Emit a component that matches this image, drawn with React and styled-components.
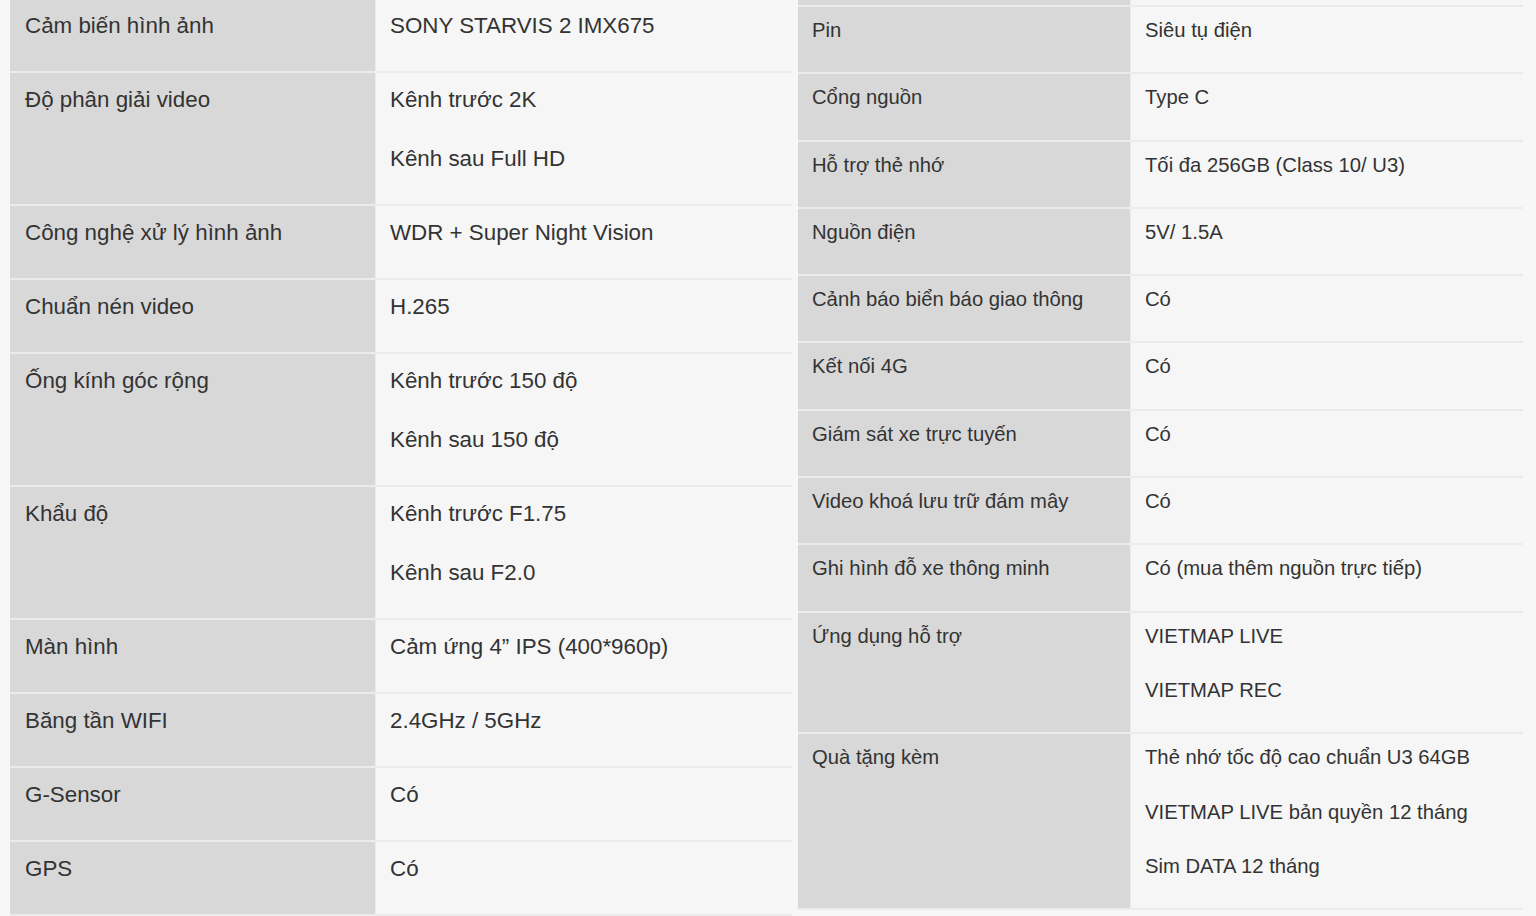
import React from 'react';
import styled, { createGlobalStyle } from 'styled-components';

const GlobalStyle = createGlobalStyle`
  html, body {
    margin: 0;
    padding: 0;
    background: #f7f7f7;
    overflow: hidden;
  }
  body {
    font-family: "Liberation Sans", Arial, sans-serif;
    color: #333;
  }
`;

const Page = styled.div`
  display: flex;
  align-items: flex-start;
  gap: 6px;
  padding-left: 10px;
  width: 1536px;
  height: 916px;
  box-sizing: border-box;
  overflow: hidden;
`;

const Table = styled.div`
  width: ${(p) => p.$width}px;
  margin-top: ${(p) => p.$offset || 0}px;
  font-size: ${(p) => p.$fs}px;
  flex-shrink: 0;
`;

const Row = styled.div`
  display: grid;
  grid-template-columns: ${(p) => p.$labelWidth}px 1fr;
  border-bottom: 2px solid #ebebeb;
  height: ${(p) => (p.$cut ? `${p.$cut}px` : 'auto')};
`;

const Cell = styled.div`
  padding: ${(p) => (p.$cut ? 0 : `${p.$pt}px ${p.$px}px ${p.$pb}px`)};
  line-height: ${(p) => p.$lh}px;
`;

const Label = styled(Cell)`
  background: #d8d8d8;
`;

const Value = styled(Cell)`
  background: #f6f6f6;
  border-left: 1px solid #ececec;
`;

const Line = styled.p`
  margin: 0 0 ${(p) => p.$gap}px;
`;

const leftRows = [
  ['Cảm biến hình ảnh', ['SONY STARVIS 2 IMX675']],
  ['Độ phân giải video', ['Kênh trước 2K', 'Kênh sau Full HD']],
  ['Công nghệ xử lý hình ảnh', ['WDR + Super Night Vision']],
  ['Chuẩn nén video', ['H.265']],
  ['Ống kính góc rộng', ['Kênh trước 150 độ', 'Kênh sau 150 độ']],
  ['Khẩu độ', ['Kênh trước F1.75', 'Kênh sau F2.0']],
  ['Màn hình', ['Cảm ứng 4” IPS (400*960p)']],
  ['Băng tần WIFI', ['2.4GHz / 5GHz']],
  ['G-Sensor', ['Có']],
  ['GPS', ['Có']],
];

const rightRows = [
  ['Pin', ['Siêu tụ điện']],
  ['Cổng nguồn', ['Type C']],
  ['Hỗ trợ thẻ nhớ', ['Tối đa 256GB (Class 10/ U3)']],
  ['Nguồn điện', ['5V/ 1.5A']],
  ['Cảnh báo biển báo giao thông', ['Có']],
  ['Kết nối 4G', ['Có']],
  ['Giám sát xe trực tuyến', ['Có']],
  ['Video khoá lưu trữ đám mây', ['Có']],
  ['Ghi hình đỗ xe thông minh', ['Có (mua thêm nguồn trực tiếp)']],
  ['Ứng dụng hỗ trợ', ['VIETMAP LIVE', 'VIETMAP REC']],
  ['Quà tặng kèm', ['Thẻ nhớ tốc độ cao chuẩn U3 64GB', 'VIETMAP LIVE bản quyền 12 tháng', 'Sim DATA 12 tháng']],
];

const SpecTable = ({ rows, width, labelWidth, fs, lh, pt, pb, px, valuePx, gap, offset, cutTop }) => (
  <Table $width={width} $fs={fs} $offset={offset}>
    {cutTop && (
      <Row $labelWidth={labelWidth} $cut={cutTop}>
        <Label $cut />
        <Value $cut />
      </Row>
    )}
    {rows.map(([label, values]) => (
      <Row key={label} $labelWidth={labelWidth}>
        <Label $pt={pt} $pb={pb} $px={px} $lh={lh}>
          <Line $gap={gap}>{label}</Line>
        </Label>
        <Value $pt={pt} $pb={pb} $px={valuePx} $lh={lh}>
          {values.map((v) => (
            <Line key={v} $gap={gap}>{v}</Line>
          ))}
        </Value>
      </Row>
    ))}
  </Table>
);

export default function App() {
  return (
    <>
      <GlobalStyle />
      <Page>
        <SpecTable
          rows={leftRows}
          width={782}
          labelWidth={365}
          fs={22.35}
          lh={33}
          pt={10}
          pb={3}
          px={15}
          valuePx={14}
          gap={26}
          offset={-1}
        />
        <SpecTable
          rows={rightRows}
          width={725}
          labelWidth={332}
          fs={20.25}
          lh={30}
          pt={8}
          pb={3}
          px={14}
          valuePx={14}
          gap={24.3}
          cutTop={5}
        />
      </Page>
    </>
  );
}
